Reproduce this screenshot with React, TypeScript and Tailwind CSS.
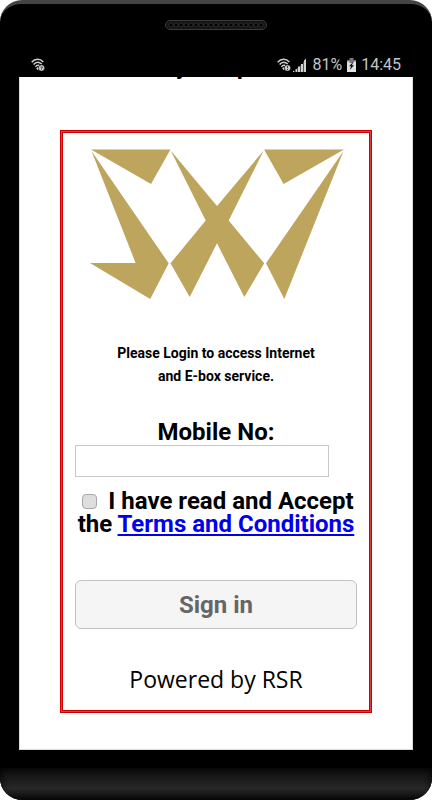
function WifiIcon({ mark }: { mark: string }) {
  return (
    <svg className="h-[14px] w-[14px]" viewBox="0 0 14 14" fill="none" stroke="#cfcfcf" aria-hidden="true">
      <path d="M.7 4.300C4 .3 9 .3 12.300 4" strokeWidth="1.500" />
      <path d="M2.600 6.500C4.800 3.800 8 3.800 10.800 6" strokeWidth="1.500" />
      <path d="M4.400 8.900C5.600 7.300 6.800 7 8.200 7.500" strokeWidth="1.400" />
      <path d="M5.400 10.300l1.600 1.800V9.600z" fill="#cfcfcf" strokeWidth=".6" />
      <circle cx="10.500" cy="10" r="3" fill="#cfcfcf" stroke="#000" strokeWidth=".3" />
      <path d={mark} stroke="#444" strokeWidth="1" />
    </svg>
  );
}

function SignalIcon() {
  return (
    <svg className="h-[14px] w-[14px]" viewBox="0 0 14 14" aria-hidden="true">
      <path d="M0 13h1.500v1H0zM2.500 11H4v3H2.500zM5 8.500h2V14H5zM8 6h2v8H8zM11 2.500L13 .5V14h-2z" fill="#d0d0d0" />
      <path d="M1.500 12.500h1V14h-1zM4 10h1v4H4zM7 7.500h1V14H7zM10 4h1v10h-1z" fill="#555" />
    </svg>
  );
}

function BatteryIcon() {
  return (
    <svg className="h-[14px] w-[9px]" viewBox="0 0 9 14" aria-hidden="true">
      <path d="M2.500 0h4v2H9v3H0V2h2.500z" fill="#777" />
      <path d="M0 3.500h3L2 5h4l1-1.500h2V14H0z" fill="#e2e2e2" />
      <path d="M6.500 3.500L2 8.200h2L2.800 12 7 7.300H5z" fill="#111" />
    </svg>
  );
}

function Speaker() {
  return (
    <svg className="mx-auto h-[10px] w-[102px]" viewBox="0 0 102 10" aria-hidden="true">
      <rect x=".5" y=".5" width="101" height="9" rx="4.500" fill="#141414" stroke="#3c3c3c" />
      {Array.from({ length: 19 }, (_, i) => (
        <circle key={i} cx={6 + i * 5} cy="5" r="2" fill="#000" stroke="#3a3a3a" strokeWidth=".7" />
      ))}
    </svg>
  );
}

function Logo() {
  return (
    <svg className="mx-auto h-[150px] w-64" viewBox="88 149 256 150" fill="#bda55d" role="img" aria-label="Logo">
      <path d="M91 149.500H170.500L151 184z" />
      <path d="M91.500 151L168.700 263.300 150.200 299 90 263H135.600z" />
      <path d="M170.700 150.500L217 206 263.700 150.500 228.700 220.500 264.200 263.300 244.300 297 217 243.300 189.700 297 170.500 263.300 205.700 220.500z" />
      <path d="M264 149.500H344L283.600 184z" />
      <path d="M343.500 151L266 263.300 284.300 299z" />
    </svg>
  );
}

function StatusBar() {
  return (
    <div className="flex h-6 items-center justify-between px-3 text-base leading-6 text-[#c4c4c4]">
      <WifiIcon mark="M9.500 9h1.800v1L10.500 10.600v1" />
      <div className="flex items-center gap-[5px]">
        <div className="flex items-center gap-0.5">
          <WifiIcon mark="M10.500 8v2.300M10.500 11v1" />
          <SignalIcon />
        </div>
        <span>81%</span>
        <BatteryIcon />
        <span>14:45</span>
      </div>
    </div>
  );
}

function LoginCard() {
  return (
    <div className="mx-10 mt-[50px] border border-[#cc0000] bg-[#dc3c42] p-px">
      <form
        className="border border-[#cc0000] bg-white px-3 pt-4 pb-4 text-center"
        onSubmit={(e) => e.preventDefault()}
      >
        <Logo />
        <p className="mx-auto mt-[43px] max-w-[220px] text-sm leading-[23px] font-bold">
          Please Login to access Internet and E-box service.
        </p>
        <div className="mt-[33px] text-2xl leading-[23px] font-bold">
          <label htmlFor="mobile" className="block">
            Mobile No:
          </label>
          <input
            id="mobile"
            type="tel"
            className="mt-px block h-8 w-9/10 border border-[#c8c8c8] bg-white px-2 text-base font-normal"
          />
          <div className="mt-[13px]">
            <input
              id="accept"
              type="checkbox"
              className="mr-[11px] ml-1 h-[15px] w-[15px] appearance-none rounded-sm border border-[#a8a8a8] bg-[#dedede] checked:bg-[#555]"
            />
            <label htmlFor="accept">I have read and Accept the </label>
            <a href="#terms" className="text-[#0000ee] underline">
              Terms and Conditions
            </a>
          </div>
        </div>
        <button
          type="submit"
          className="mt-11 block h-[49px] w-full rounded-md border border-[#c0c0c0] bg-[#f5f5f5] text-2xl font-bold text-[#666]"
        >
          Sign in
        </button>
        <p className="mt-[35px] font-['Open_Sans',sans-serif] text-[23px] leading-[30px]">Powered by RSR</p>
      </form>
    </div>
  );
}

export default function App() {
  return (
    <div className="bg-white font-['Roboto',sans-serif] text-black">
      <div className="flex min-h-screen flex-col overflow-hidden rounded-[22px] border-t-4 border-[#444] bg-black">
        <div className="px-[19px] pt-4">
          <Speaker />
          <div className="mt-[23px]">
            <StatusBar />
          </div>
        </div>
        <main className="mx-[19px] flex-1 border-x border-b border-[#ddd] bg-white">
          <div className="flex h-[3px] items-end justify-center gap-[49px] overflow-hidden pr-[6px] text-2xl leading-7 font-bold">
            <span>y</span>
            <span>p</span>
          </div>
          <LoginCard />
        </main>
        <div className="mt-[18px] h-8 bg-linear-to-b from-[#0e0e0e] via-[#282828] via-65% to-[#0c0c0c] shadow-[inset_0_0_8px_#000]" />
      </div>
    </div>
  );
}
